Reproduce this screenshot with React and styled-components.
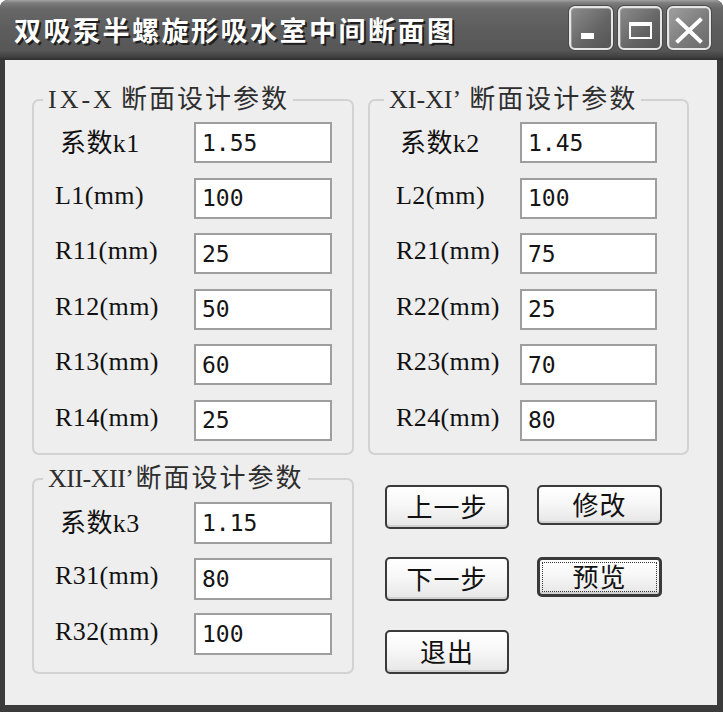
import React from 'react';
import styled, { createGlobalStyle } from 'styled-components';

const Global = createGlobalStyle`
  html, body { margin: 0; padding: 0; background: #ffffff; }
  #root { width: 723px; height: 712px; }
  * { box-sizing: border-box; }
`;

const Window = styled.div`
  width: 723px;
  height: 712px;
  display: flex;
  flex-direction: column;
  background: #3b3b3b;
  border-radius: 8px 8px 0 0;
  overflow: hidden;
`;

const TitleBar = styled.div`
  height: 60px;
  flex: none;
  display: flex;
  align-items: center;
  justify-content: space-between;
  padding: 0 12px 0 14px;
  background: linear-gradient(
    to bottom,
    #a2a2a2 0px,
    #7c7c7c 3px,
    #676767 9px,
    #5d5d5d 30px,
    #575757 50px,
    #444444 56px,
    #2e2e2e 60px
  );
`;

const Title = styled.div`
  font-family: "Noto Sans CJK SC", sans-serif;
  font-weight: 700;
  font-size: 27px;
  letter-spacing: 2.5px;
  color: #ffffff;
  text-shadow: 2px 2px 0 #202020;
  line-height: 1;
  padding-bottom: 2px;
`;

const CapButtons = styled.div`
  display: flex;
  gap: 5px;
  padding-bottom: 4px;
`;

const CapBtn = styled.div`
  width: 44px;
  height: 44px;
  border: 2px solid #e6e6e6;
  border-radius: 6px;
  display: flex;
  align-items: center;
  justify-content: center;
  background: ${p =>
    p.$light
      ? 'linear-gradient(135deg, #a0a0a0 0%, #7a7a7a 60%, #6a6a6a 100%)'
      : 'linear-gradient(135deg, #8c8c8c 0%, #646464 60%, #555555 100%)'};
  box-shadow: inset 1px 1px 0 #9a9a9a, 0 0 0 1px #4a4a4a;
`;

const Client = styled.div`
  flex: 1;
  margin: 0 6px 7px 5px;
  background: #eeeeee;
  display: grid;
  grid-template-columns: 322px 321px;
  grid-template-rows: auto auto;
  column-gap: 14px;
  row-gap: 9px;
  align-content: start;
  padding: 25px 0 0 27px;
`;

const Group = styled.fieldset`
  margin: 0;
  min-width: 0;
  border: 2px solid #d2d2d2;
  border-radius: 7px;
  padding: ${p => p.$pad};
  display: grid;
  grid-template-columns: ${p => p.$cols};
  grid-auto-rows: ${p => p.$rowH}px;
  row-gap: ${p => p.$gap}px;
  align-items: center;
`;

const Legend = styled.legend`
  margin-left: -12px;
  padding: 0 4px 0 5px;
  font-family: "Liberation Serif", "Noto Sans CJK SC", serif;
  font-size: 26px;
  line-height: 30px;
  letter-spacing: 2px;
  white-space: nowrap;
  color: #2e2e2e;
`;

const Roman = styled.span`
  letter-spacing: ${p => p.$spacing || 0}px;
  margin-right: ${p => p.$gap || 4}px;
`;

const Label = styled.label`
  font-family: "Liberation Serif", "Noto Sans CJK SC", serif;
  font-size: 26px;
  letter-spacing: 0.4px;
  color: #111111;
  padding-left: ${p => p.$indent || 0}px;
  padding-bottom: 5px;
  white-space: nowrap;
`;

const Field = styled.input`
  height: 100%;
  width: 100%;
  border: 2px solid #9e9e9e;
  background: #ffffff;
  padding: 0 0 0 6px;
  font-family: "DejaVu Sans Mono", monospace;
  font-size: 23px;
  color: #151515;
  outline: none;
`;

const ButtonArea = styled.div`
  display: grid;
  grid-template-columns: 124px 125px;
  grid-auto-rows: 44px;
  column-gap: 28px;
  row-gap: 28.5px;
  align-items: start;
  align-content: start;
  padding: 21px 0 0 17px;
`;

const Btn = styled.button`
  height: ${p => (p.$short ? 40 : 44)}px;
  width: 100%;
  border: ${p => (p.$default ? 3 : 2)}px solid #3a3a3a;
  border-radius: 5px;
  background: linear-gradient(to bottom, #ffffff 0%, #f7f7f7 45%, #e6e6e6 100%);
  box-shadow: inset 0 -2px 0 #d0d0d0;
  font-family: "Noto Sans CJK SC", sans-serif;
  font-size: 26px;
  letter-spacing: 1px;
  line-height: 1;
  color: #111111;
  padding: 0 0 2px 0;
  outline: ${p => (p.$default ? '1.5px dotted #333' : 'none')};
  outline-offset: -6px;
`;

const MinIcon = () => (
  <svg width="40" height="40" viewBox="0 0 40 40">
    <rect x="10" y="25" width="13" height="6" fill="#ffffff" />
  </svg>
);

const MaxIcon = () => (
  <svg width="40" height="40" viewBox="0 0 40 40">
    <rect x="10" y="15" width="21" height="15" fill="none" stroke="#ffffff" strokeWidth="2" />
    <rect x="9" y="14" width="23" height="4" fill="#ffffff" />
  </svg>
);

const CloseIcon = () => (
  <svg width="40" height="40" viewBox="0 0 40 40">
    <path d="M9 12 L31 33 M31 12 L9 33" stroke="#ffffff" strokeWidth="4" strokeLinecap="square" />
  </svg>
);

const group1 = [
  ['系数k1', '1.55', 5],
  ['L1(mm)', '100', 0],
  ['R11(mm)', '25', 0],
  ['R12(mm)', '50', 0],
  ['R13(mm)', '60', 0],
  ['R14(mm)', '25', 0],
];

const group2 = [
  ['系数k2', '1.45', 4],
  ['L2(mm)', '100', 0],
  ['R21(mm)', '75', 0],
  ['R22(mm)', '25', 0],
  ['R23(mm)', '70', 0],
  ['R24(mm)', '80', 0],
];

const group3 = [
  ['系数k3', '1.15', 5],
  ['R31(mm)', '80', 0],
  ['R32(mm)', '100', 0],
];

const Rows = ({ data }) =>
  data.map(([label, value, indent]) => (
    <React.Fragment key={label}>
      <Label $indent={indent}>{label}</Label>
      <Field defaultValue={value} />
    </React.Fragment>
  ));

export default function App() {
  return (
    <>
      <Global />
      <Window>
        <TitleBar>
          <Title>双吸泵半螺旋形吸水室中间断面图</Title>
          <CapButtons>
            <CapBtn><MinIcon /></CapBtn>
            <CapBtn><MaxIcon /></CapBtn>
            <CapBtn $light><CloseIcon /></CapBtn>
          </CapButtons>
        </TitleBar>
        <Client>
          <Group $pad="7px 20px 12px 21px" $cols="139px 138px" $rowH={41} $gap={14.6}>
            <Legend><Roman $spacing={3} $gap={6}>IX-X</Roman>断面设计参数</Legend>
            <Rows data={group1} />
          </Group>
          <Group $pad="7px 30px 12px 26px" $cols="124px 137px" $rowH={41} $gap={14.6}>
            <Legend><Roman $gap={8}>XI-XI’</Roman>断面设计参数</Legend>
            <Rows data={group2} />
          </Group>
          <Group $pad="8px 20px 15px 21px" $cols="139px 138px" $rowH={42} $gap={13.7}>
            <Legend><Roman $spacing={-0.5} $gap={2}>XII-XII’</Roman>断面设计参数</Legend>
            <Rows data={group3} />
          </Group>
          <ButtonArea>
            <Btn>上一步</Btn>
            <Btn $short>修改</Btn>
            <Btn>下一步</Btn>
            <Btn $short $default>预览</Btn>
            <Btn>退出</Btn>
          </ButtonArea>
        </Client>
      </Window>
    </>
  );
}
